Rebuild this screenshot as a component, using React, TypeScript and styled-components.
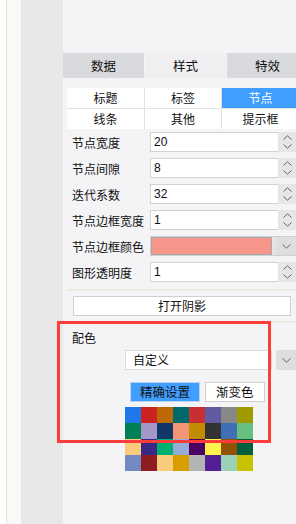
import styled, { createGlobalStyle } from "styled-components";

interface ITab {
  active?: boolean;
}

const palette = [
  "#1e78eb", "#cc2222", "#bf6807", "#006a6b", "#c82f35", "#635ba1", "#888888", "#9e9a00",
  "#007f55", "#a297c7", "#11366a", "#f29675", "#c18c00", "#333333", "#416fb4", "#65bf7e",
  "#f8cc7a", "#3a2884", "#00af71", "#93acd8", "#4a0263", "#fef14b", "#935104", "#015e3f",
  "#7289c1", "#8e1d22", "#f8cc7a", "#d99d00", "#b4b4b4", "#541f95", "#9ad1b8", "#c8c200",
];

const numberRows = [
  { label: "节点宽度", value: "20" },
  { label: "节点间隙", value: "8" },
  { label: "迭代系数", value: "32" },
  { label: "节点边框宽度", value: "1" },
];

const GlobalStyle = createGlobalStyle`
  * { box-sizing: border-box; }
  body {
    margin: 0;
    font-family: "Noto Sans CJK SC", "Noto Sans", sans-serif;
    font-size: 12px;
    color: #222;
  }
`;

const Chevron = ({ up }: { up?: boolean }) => (
  <svg width="9" height="5" viewBox="0 0 9 5">
    <path
      d={up ? "M0.5 4.5 L4.5 0.8 L8.5 4.5" : "M0.5 0.5 L4.5 4.2 L8.5 0.5"}
      fill="none"
      stroke="#666"
      strokeWidth="1"
    />
  </svg>
);

const NumberField = ({ value }: { value: string }) => (
  <FieldWrap>
    <Field>{value}</Field>
    <Spinner>
      <Chevron up />
      <Chevron />
    </Spinner>
  </FieldWrap>
);

const App = () => {
  return (
    <>
      <GlobalStyle />
      <Page>
        <RailWhite />
        <RailPale />
        <Sidebar />
        <Panel>
          <TabBar>
            <Tab>数据</Tab>
            <Tab active>样式</Tab>
            <Tab>特效</Tab>
          </TabBar>

          <SubTabs>
            <SubTab>标题</SubTab>
            <SubTab>标签</SubTab>
            <SubTab active>节点</SubTab>
            <SubTab>线条</SubTab>
            <SubTab>其他</SubTab>
            <SubTab>提示框</SubTab>
          </SubTabs>

          <Form>
            {numberRows.map((row) => (
              <Row key={row.label}>
                <Label>{row.label}</Label>
                <NumberField value={row.value} />
              </Row>
            ))}
            <Row>
              <Label>节点边框颜色</Label>
              <ColorSelect>
                <Swatch color="#f7968b" />
                <SelectArrow>
                  <Chevron />
                </SelectArrow>
              </ColorSelect>
            </Row>
            <Row>
              <Label>图形透明度</Label>
              <NumberField value="1" />
            </Row>
          </Form>

          <Divider />
          <ShadowButton>打开阴影</ShadowButton>
          <Divider $inset />

          <Section>
            <SectionTitle>配色</SectionTitle>
            <Select>
              <SelectText>自定义</SelectText>
              <SelectArrow>
                <Chevron />
              </SelectArrow>
            </Select>
            <ModeButtons>
              <ModeButton active>精确设置</ModeButton>
              <ModeButton>渐变色</ModeButton>
            </ModeButtons>
            <Grid>
              {palette.map((c, i) => (
                <Cell key={i} color={c} />
              ))}
            </Grid>
          </Section>
        </Panel>
        <Highlight />
      </Page>
    </>
  );
};

export default App;

const Page = styled.div`
  position: relative;
  display: flex;
  width: 296px;
  height: 524px;
  overflow: hidden;
`;

const RailWhite = styled.div`
  width: 7px;
  background: #ffffff;
  border-right: 1px solid #ebe3d3;
`;

const RailPale = styled.div`
  width: 15px;
  background: #f9f9f7;
  border-right: 1px solid #ebe3d3;
`;

const Sidebar = styled.div`
  width: 41px;
  background: #e8e8e8;
`;

const Panel = styled.div`
  flex: 1;
  min-width: 0;
  background: #f4f4f6;
  padding-top: 53px;
  overflow: hidden;
`;

const TabBar = styled.div`
  display: flex;
  gap: 1px;
  height: 25px;
  width: 250px;
`;

const Tab = styled.div<ITab>`
  flex: 0 0 81px;
  text-align: center;
  line-height: 25px;
  font-size: 12.5px;
  background: ${(p) => (p.active ? "#efeff1" : "#d9dadd")};
  color: #111;
`;

const SubTabs = styled.div`
  display: grid;
  grid-template-columns: 77px 76px 77px;
  grid-auto-rows: 20px;
  gap: 1px;
  margin: 10px 0 0 4px;
  background: #e2e2e4;
  width: 232px;
`;

const SubTab = styled.div<ITab>`
  text-align: center;
  line-height: 20px;
  background: ${(p) => (p.active ? "#409eff" : "#ffffff")};
  color: ${(p) => (p.active ? "#ffffff" : "#111")};
`;

const Form = styled.div`
  display: flex;
  flex-direction: column;
  gap: 6px;
  margin-top: 3px;
  padding-left: 9px;
`;

const Row = styled.div`
  display: flex;
  align-items: center;
  height: 20px;
`;

const Label = styled.div`
  width: 78px;
  flex: none;
  color: #111;
`;

const FieldWrap = styled.div`
  flex: 1;
  display: flex;
  height: 20px;
`;

const Field = styled.div`
  flex: 1;
  background: #ffffff;
  border: 1px solid #d2d2d2;
  border-right: 0;
  padding-left: 3px;
  font-family: "Liberation Sans", Arial, sans-serif;
  font-size: 12px;
  line-height: 18px;
  color: #0a0a20;
`;

const Spinner = styled.div`
  width: 18px;
  background: #e6e6e6;
  display: flex;
  flex-direction: column;
  align-items: center;
  justify-content: center;
  gap: 4px;
`;

const ColorSelect = styled.div`
  flex: 1;
  display: flex;
  height: 20px;
  background: #e4e4e4;
  border: 1px solid #d0d0d0;
  border-right: 0;
`;

const Swatch = styled.div<{ color: string }>`
  flex: 1;
  background: ${(p) => p.color};
  border: 1px solid #a9a9a9;
`;

const SelectArrow = styled.div`
  width: 20px;
  background: #dedede;
  display: flex;
  align-items: center;
  justify-content: center;
  margin-left: 4px;
`;

const Divider = styled.div<{ $inset?: boolean }>`
  height: 2px;
  margin: ${(p) => (p.$inset ? "5px 0 0 10px" : "7px 0 0 4px")};
  background: #eae8df;
`;

const ShadowButton = styled.div`
  height: 20px;
  margin: 5px 5px 0 10px;
  background: #ffffff;
  border: 1px solid #d0d0d0;
  text-align: center;
  line-height: 18px;
  color: #111;
`;

const Section = styled.div`
  padding-top: 7px;
`;

const SectionTitle = styled.div`
  padding-left: 9px;
  line-height: 16px;
  color: #111;
`;

const Select = styled.div`
  display: flex;
  height: 20px;
  margin: 4px 0 0 62px;
`;

const SelectText = styled.div`
  flex: 1;
  background: #ffffff;
  border: 1px solid #dadada;
  padding-left: 7px;
  line-height: 18px;
  color: #111;
`;

const ModeButtons = styled.div`
  display: flex;
  gap: 5px;
  margin: 12px 0 0 67px;
`;

const ModeButton = styled.div<ITab>`
  height: 20px;
  padding: 0 ${(p) => (p.active ? "9px" : "10px")};
  line-height: 18px;
  font-size: 12.5px;
  background: ${(p) => (p.active ? "#409eff" : "#ffffff")};
  border: 1px solid ${(p) => (p.active ? "#b9d4f2" : "#d0d0d0")};
  color: #111;
`;

const Grid = styled.div`
  display: grid;
  grid-template-columns: repeat(8, 16px);
  grid-auto-rows: 16px;
  margin: 5px 0 0 62px;
`;

const Cell = styled.div<{ color: string }>`
  background: ${(p) => p.color};
`;

const Highlight = styled.div`
  position: absolute;
  left: 57px;
  top: 321px;
  width: 214px;
  height: 122px;
  border: 3px solid #fd3c3c;
  pointer-events: none;
`;
